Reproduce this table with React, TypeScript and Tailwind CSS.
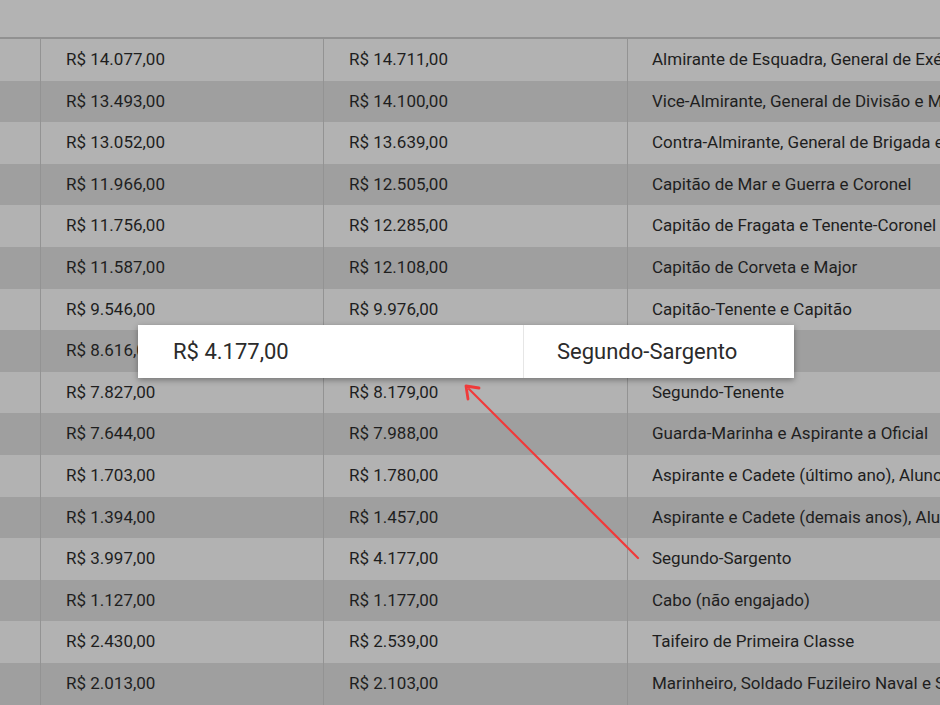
import React from 'react';

const rows: [string, string, string][] = [
  ['R$ 14.077,00', 'R$ 14.711,00', 'Almirante de Esquadra, General de Exército e Tenente-Brigadeiro'],
  ['R$ 13.493,00', 'R$ 14.100,00', 'Vice-Almirante, General de Divisão e Major-Brigadeiro'],
  ['R$ 13.052,00', 'R$ 13.639,00', 'Contra-Almirante, General de Brigada e Brigadeiro'],
  ['R$ 11.966,00', 'R$ 12.505,00', 'Capitão de Mar e Guerra e Coronel'],
  ['R$ 11.756,00', 'R$ 12.285,00', 'Capitão de Fragata e Tenente-Coronel'],
  ['R$ 11.587,00', 'R$ 12.108,00', 'Capitão de Corveta e Major'],
  ['R$ 9.546,00', 'R$ 9.976,00', 'Capitão-Tenente e Capitão'],
  ['R$ 8.616,00', 'R$ 9.004,00', 'Primeiro-Tenente'],
  ['R$ 7.827,00', 'R$ 8.179,00', 'Segundo-Tenente'],
  ['R$ 7.644,00', 'R$ 7.988,00', 'Guarda-Marinha e Aspirante a Oficial'],
  ['R$ 1.703,00', 'R$ 1.780,00', 'Aspirante e Cadete (último ano), Aluno do Instituto Militar de Engenharia'],
  ['R$ 1.394,00', 'R$ 1.457,00', 'Aspirante e Cadete (demais anos), Aluno do Instituto Militar de Engenharia'],
  ['R$ 3.997,00', 'R$ 4.177,00', 'Segundo-Sargento'],
  ['R$ 1.127,00', 'R$ 1.177,00', 'Cabo (não engajado)'],
  ['R$ 2.430,00', 'R$ 2.539,00', 'Taifeiro de Primeira Classe'],
  ['R$ 2.013,00', 'R$ 2.103,00', 'Marinheiro, Soldado Fuzileiro Naval e Soldado'],
];

const App: React.FC = () => {
  return (
    <div
      className="relative w-[940px] h-[705px] overflow-hidden bg-[#b3b3b3]"
      style={{ fontFamily: 'Roboto, "Liberation Sans", sans-serif' }}
    >
      {/* header strip */}
      <div className="h-[39px] border-b-2 border-[#919191] bg-[#b3b3b3]" />

      {/* table body */}
      <div className="w-[1400px]">
        {rows.map((row, i) => (
          <div
            key={i}
            className={`grid grid-cols-[41px_283px_304px_1fr] h-[41.6px] text-[17px] text-[#1e1e1e] ${
              i % 2 === 0 ? 'bg-[#b2b2b2]' : 'bg-[#9f9f9f]'
            }`}
          >
            <div className="border-r border-[#939393]" />
            <div className="flex items-center pl-[25px] border-r border-[#939393] whitespace-nowrap">
              {row[0]}
            </div>
            <div className="flex items-center pl-[25px] border-r border-[#939393] whitespace-nowrap">
              {row[1]}
            </div>
            <div className="flex items-center pl-[24px] whitespace-nowrap">{row[2]}</div>
          </div>
        ))}
      </div>

      {/* highlighted row popup */}
      <div className="absolute left-[138px] top-[325px] w-[656px] h-[53px] bg-white shadow-[0_2px_6px_rgba(0,0,0,0.35)] flex text-[22px] text-[#2b2b2b]">
        <div className="w-[386px] flex items-center pl-[35px] border-r border-[#e6e6e6]">R$ 4.177,00</div>
        <div className="flex-1 flex items-center pl-[33px]">Segundo-Sargento</div>
      </div>

      {/* red arrow */}
      <svg className="absolute left-0 top-0 pointer-events-none" width="940" height="705">
        <line x1="638" y1="558" x2="469" y2="389" stroke="#f03a3a" strokeWidth="2.2" strokeLinecap="round" />
        <path d="M466 386 L468 399 M466 386 L479 388" stroke="#f03a3a" strokeWidth="2.8" strokeLinecap="round" fill="none" />
      </svg>
    </div>
  );
};

export default App;
